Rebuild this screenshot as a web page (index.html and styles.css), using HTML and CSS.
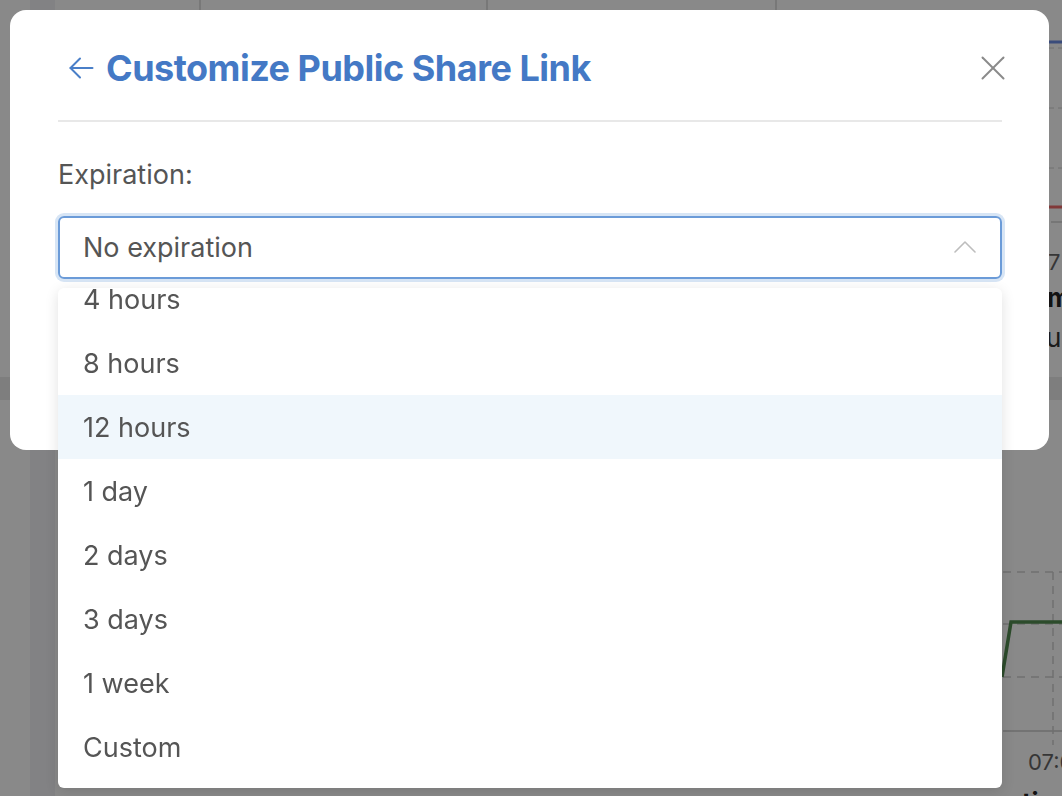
FILE: index.html
```html
<!DOCTYPE html>
<html lang="en">
<head>
<meta charset="utf-8">
<title>Customize Public Share Link</title>
<link rel="stylesheet" href="styles.css">
</head>
<body>
<div class="dashboard" aria-hidden="true">
  <svg class="dash-art" width="1062" height="796" viewBox="0 0 1062 796">
    <rect x="0" y="0" width="1062" height="796" fill="#ffffff"/>
    <rect x="30" y="0" width="25" height="796" fill="#f3f3f5"/>
    <rect x="0" y="377" width="1062" height="23" fill="#ebebeb"/>
    <line x1="200" y1="0" x2="200" y2="12" stroke="#d6d6d6" stroke-width="1.5"/>
    <line x1="487" y1="0" x2="487" y2="12" stroke="#d6d6d6" stroke-width="1.5"/>
    <line x1="776" y1="0" x2="776" y2="12" stroke="#d6d6d6" stroke-width="1.5"/>
    <line x1="1049" y1="48" x2="1062" y2="48" stroke="#d0d0d0" stroke-width="1" stroke-dasharray="5 4"/>
    <line x1="1049" y1="108" x2="1062" y2="108" stroke="#d0d0d0" stroke-width="1" stroke-dasharray="5 4"/>
    <line x1="1049" y1="168" x2="1062" y2="168" stroke="#d0d0d0" stroke-width="1" stroke-dasharray="5 4"/>
    <line x1="1049" y1="42" x2="1062" y2="42" stroke="#6d8de6" stroke-width="3"/>
    <line x1="1049" y1="207" x2="1062" y2="207" stroke="#f06a6a" stroke-width="3"/>
    <line x1="1051" y1="222" x2="1062" y2="222" stroke="#cfcfcf" stroke-width="1.5"/>
    <text x="1048" y="270" class="dash-tick">7</text>
    <text x="1047" y="307" class="dash-bold">m</text>
    <text x="1046" y="347" class="dash-text">u</text>
    <line x1="1003" y1="572" x2="1062" y2="572" stroke="#cfcfcf" stroke-width="1.5" stroke-dasharray="8 6"/>
    <line x1="1003" y1="624" x2="1062" y2="624" stroke="#cfcfcf" stroke-width="1.5" stroke-dasharray="8 6"/>
    <line x1="1003" y1="677" x2="1062" y2="677" stroke="#cfcfcf" stroke-width="1.5" stroke-dasharray="8 6"/>
    <line x1="1003" y1="731" x2="1062" y2="731" stroke="#c8c8c8" stroke-width="1.5"/>
    <line x1="1053" y1="572" x2="1053" y2="745" stroke="#cfcfcf" stroke-width="1.5" stroke-dasharray="8 6"/>
    <polyline points="1002,677 1011,622 1062,622" fill="none" stroke="#528c50" stroke-width="3.5"/>
    <text x="1028" y="770" class="dash-tick">07:00</text>
    <text x="1022" y="812" class="dash-bold">time</text>
  </svg>
</div>
<div class="overlay"></div>

<section class="modal" role="dialog" aria-labelledby="dlg-title">
  <header class="modal-head">
    <button class="icon-btn back" type="button" aria-label="Back">
      <svg width="28" height="28" viewBox="0 0 28 28" fill="none" stroke="currentColor" stroke-width="2" stroke-linecap="round" stroke-linejoin="round">
        <path d="M25.5 14H3.5"/>
        <path d="M13 4.5L3.5 14L13 23.5"/>
      </svg>
    </button>
    <h1 class="title" id="dlg-title">Customize Public Share Link</h1>
    <button class="icon-btn close" type="button" aria-label="Close">
      <svg width="24" height="24" viewBox="0 0 24 24" fill="none" stroke="currentColor" stroke-width="2" stroke-linecap="round">
        <path d="M1.5 1.5L22.5 22.5"/>
        <path d="M22.5 1.5L1.5 22.5"/>
      </svg>
    </button>
  </header>
  <div class="divider"></div>

  <div class="field">
    <div class="field-label">Expiration:</div>
    <div class="select-wrap">
      <div class="select">
        <span class="select-value">No expiration</span>
        <svg class="chevron" width="22" height="12" viewBox="0 0 22 12" fill="none" stroke="currentColor" stroke-width="1.6" stroke-linecap="round" stroke-linejoin="round">
          <path d="M1 11L11 1L21 11"/>
        </svg>
      </div>
      <div class="menu">
        <ul class="menu-list">
          <li class="menu-item">4 hours</li>
          <li class="menu-item">8 hours</li>
          <li class="menu-item is-active">12 hours</li>
          <li class="menu-item">1 day</li>
          <li class="menu-item">2 days</li>
          <li class="menu-item">3 days</li>
          <li class="menu-item">1 week</li>
          <li class="menu-item">Custom</li>
        </ul>
      </div>
    </div>
  </div>
</section>
</body>
</html>
```

FILE: styles.css
```css
* {
  box-sizing: border-box;
}

html, body {
  margin: 0;
  padding: 0;
  width: 1062px;
  height: 796px;
  overflow: hidden;
  font-family: "Inter", "Liberation Sans", sans-serif;
  background: #ffffff;
}

.dashboard {
  width: 1062px;
  height: 796px;
}

.dash-art {
  display: block;
}

.dash-tick {
  font-family: "Inter", "Liberation Sans", sans-serif;
  font-size: 22px;
  fill: #666666;
}

.dash-bold {
  font-family: "Inter", "Liberation Sans", sans-serif;
  font-size: 26px;
  font-weight: 700;
  fill: #222222;
}

.dash-text {
  font-family: "Inter", "Liberation Sans", sans-serif;
  font-size: 26px;
  fill: #333333;
}

.overlay {
  position: fixed;
  inset: 0;
  background: rgba(0, 0, 0, 0.463);
}

.modal {
  position: absolute;
  left: 10px;
  top: 10px;
  width: 1039px;
  height: 440px;
  background: #ffffff;
  border-radius: 16px;
  padding: 36px 47px 0 48px;
}

.modal-head {
  display: flex;
  align-items: center;
  height: 44px;
}

.icon-btn {
  border: 0;
  background: none;
  padding: 0;
  display: flex;
  align-items: center;
  justify-content: center;
  cursor: pointer;
}

.back {
  color: #4a7fc8;
  margin-left: 9px;
  width: 28px;
  height: 28px;
}

.title {
  margin: 0 0 0 11px;
  font-size: 36px;
  font-weight: 700;
  color: #4479c5;
  letter-spacing: -0.5px;
  line-height: 44px;
  flex: 1;
}

.close {
  color: #8a8a8a;
  width: 24px;
  height: 24px;
  margin-right: -3px;
}

.divider {
  height: 2px;
  background: #e8e8e8;
  margin-top: 30px;
}

.field {
  margin-top: 37px;
}

.field-label {
  font-size: 27px;
  line-height: 32px;
  color: #555555;
}

.select-wrap {
  position: relative;
  margin-top: 25px;
}

.select {
  height: 63px;
  border: 2px solid #6b9bd8;
  border-radius: 6px;
  box-shadow: 0 0 0 3px #d7e5f5;
  display: flex;
  align-items: center;
  padding: 0 24px 0 23px;
}

.select-value {
  flex: 1;
  font-size: 27px;
  color: #555555;
}

.chevron {
  color: #bdbdbd;
  margin-top: -2px;
}

.menu {
  position: absolute;
  left: 0;
  right: 0;
  top: 72px;
  height: 500px;
  background: #ffffff;
  border-radius: 6px;
  box-shadow: 0 3px 14px rgba(0, 0, 0, 0.12);
  overflow: hidden;
  padding: 8px 0;
}

.menu-list {
  list-style: none;
  margin: -29px 0 0 0;
  padding: 0;
}

.menu-item {
  height: 64px;
  display: flex;
  align-items: center;
  padding-left: 25px;
  font-size: 27px;
  color: #555555;
}

.menu-item.is-active {
  background: #f0f7fc;
}
```
